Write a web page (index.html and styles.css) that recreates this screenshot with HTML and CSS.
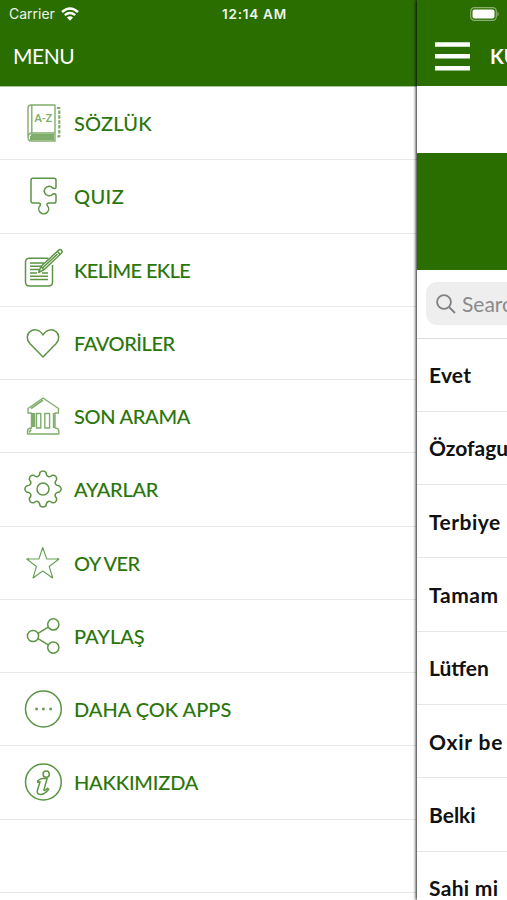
FILE: index.html
```html
<!DOCTYPE html>
<html lang="tr">
<head>
<meta charset="utf-8">
<meta name="viewport" content="width=device-width">
<title>Menu</title>
<link rel="stylesheet" href="styles.css">
</head>
<body>
<div class="phone">
  <aside class="drawer">
    <header class="drawer-head"><h1 class="title">MENU</h1></header>
    <nav class="menu">
      <a class="item"><svg class="icon faint" viewBox="0 0 40 40"><path d="M8 2H32V38H8Q5 38 5 34V5Q5 2 8 2ZM8.8 2V30M32 30H8Q5 31 5 34"/><path d="M33.8 5h2.5v28.5h-3" stroke-dasharray="3.5 1.4" stroke-width="2.2"/><path d="M8 32H31M7 34H31M7 36H31" stroke-width="2"/><text x="11.5" y="19.3">A-Z</text></svg><span class="label w1">SÖZLÜK</span></a>
      <a class="item"><svg class="icon" viewBox="0 0 40 40"><path d="M10 2.2H31Q33 2.2 33 4V11.2Q33 12.6 31.4 12.4L29.6 12Q28.5 10.2 26 10.2A4.8 4.8 0 1 0 29.6 18.3L31.5 17.8Q33 17.8 33 19.2V25.2Q33 27 31 27H25.8Q23 27.4 24.2 29.5A4.9 4.9 0 1 1 17.2 29.5Q18.4 27.4 15.6 27H10Q8 27 8 25V4Q8 2.2 10 2.2Z"/></svg><span class="label w2">QUIZ</span></a>
      <a class="item"><svg class="icon" viewBox="0 0 40 40"><path d="M25.5 8.3H6.5Q2.5 8.3 2.5 12.3V32Q2.5 36 6.5 36H25.5Q29.5 36 29.5 32V15"/><path d="M7 13H21M7 16.3H18M7 19.6H16M7 22.9H14M19 22.9H25M7 26.2H25M7 29.5H25" stroke-width="1.5"/><path d="M15.5 22.5L18 16.5L35 .7Q37.4-1.2 38.6 .2Q40 1.8 37.8 3.8L21 19.7ZM18 16.5L21 19.7M34.5 1.5L37 4.2M19.5 18L34.5 4"/></svg><span class="label w3">KELİME EKLE</span></a>
      <a class="item"><svg class="icon" viewBox="0 0 40 40"><path d="M20 34L6.8 20.5C3.4 17 3.4 11.5 7 8.7C11.2 5.1 17.3 7 20 12C22.7 7 28.8 5.1 33 8.7C36.6 11.5 36.6 17 33.2 20.5Z"/></svg><span class="label w4">FAVORİLER</span></a>
      <a class="item"><svg class="icon faint" viewBox="0 0 40 40"><path d="M20 2L35.5 12.5V17H32V32Q35.8 32 35.8 35V38H4.5V35Q4.5 32 8.5 32V17H5V12.5ZM13.5 17.5h4.3v14.5H13.5ZM21.8 17.5h4.8v14.5h-4.8ZM30.5 17v15"/><path d="M8 12.5L20 4M9.8 17V31M11.4 17V31M6 36.5L8 33.5" stroke-width="1.7"/></svg><span class="label w5">SON ARAMA</span></a>
      <a class="item"><svg class="icon" viewBox="0 0 40 40"><circle cx="20" cy="20" r="6"/><path d="M17 3.4Q20 .5 23 3.4C23.4 8 26.5 8.8 29.2 6.3Q33.5 5.7 33.7 10.4C30.8 13.8 32 16.5 36.5 17Q39.8 20 36.5 23C32 23.5 30.8 26.2 33.7 29.6Q33.5 34.3 29.2 33.7C26.5 31.2 23.4 32 23 36.6Q20 39.5 17 36.6C16.6 32 13.5 31.2 10.8 33.7Q6.5 34.3 6.3 29.6C9.2 26.2 8 23.5 3.5 23Q.2 20 3.5 17C8 16.5 9.2 13.8 6.3 10.4Q6.5 5.7 10.8 6.3C13.5 8.8 16.6 8 17 3.4Z"/></svg><span class="label w6">AYARLAR</span></a>
      <a class="item"><svg class="icon thin" viewBox="0 0 40 40"><path d="M19.7 4.5L23.7 16H36L26.2 23.5L29.7 35L19.7 28L10 35L13.4 23.5L3.7 16H15.9Z"/><path d="M19.2 6.2h1M4.7 16h1M34.2 16h1M10.7 34l.7-.6M28.9 34l-.7-.6" stroke-width="2.4"/></svg><span class="label w7">OY VER</span></a>
      <a class="item"><svg class="icon" viewBox="0 0 40 40"><circle cx="10" cy="20" r="5.6"/><circle cx="30.3" cy="8.4" r="5.6"/><circle cx="30.3" cy="31.6" r="5.6"/><path d="M15 17.3L25.3 11.2M15 22.7L25.3 28.8"/></svg><span class="label w8">PAYLAŞ</span></a>
      <a class="item"><svg class="icon" viewBox="0 0 40 40"><circle cx="20.4" cy="20" r="17.9"/><path d="M12.4 20h2.4M19.2 20h2.4M26.4 20h2.4" stroke-width="2.4"/></svg><span class="label w9">DAHA ÇOK APPS</span></a>
      <a class="item"><svg class="icon" viewBox="0 0 40 40"><circle cx="20.4" cy="20" r="17.9"/><circle cx="23.2" cy="12.2" r="3.1"/><path d="M14.6 19Q17 16.4 20 16.4H24.2L21 27.5Q20.7 29.3 22.5 28L24.5 26.2L25.7 27.3Q21.5 32.7 17.5 32.5Q13.3 32.3 14.5 28L17 19.8L14.8 20.4Z"/></svg><span class="label w10">HAKKIMIZDA</span></a>
      <div class="item"></div>
    </nav>
  </aside>
  <main class="page">
    <header class="page-head">
      <svg class="burger" viewBox="0 0 35 29"><path d="M0 2.5H35M0 14.3H35M0 26.2H35"/></svg>
      <h2 class="page-title">KU</h2>
    </header>
    <div class="space"></div>
    <div class="banner"></div>
    <div class="search-bar">
      <div class="search"><svg class="lens" viewBox="0 0 20 20"><circle cx="8" cy="8" r="6.9"/><path d="M13 13L19 19"/></svg><span>Search</span></div>
    </div>
    <ul class="words">
      <li class="x1">Evet</li><li class="x2">Özofagus</li><li class="x3">Terbiye</li><li class="x4">Tamam</li><li class="x5">Lütfen</li><li class="x6">Oxir be</li><li class="x7">Belki</li><li class="x8">Sahi mi</li>
    </ul>
  </main>
  <div class="status">
    <div class="carrier"><span>Carrier</span><svg class="wifi" viewBox="0 0 18 14"><path d="M1 5Q9-2 17 5M3.8 8.1Q9 3.8 14.2 8.1"/><path class="dot" d="M6 10.5Q9 8 12 10.5L9 13.8Z"/></svg></div>
    <span class="time">12:14 AM</span>
    <svg class="battery" viewBox="0 0 30 14"><rect class="shell" x=".7" y=".7" width="25.6" height="12.6" rx="3.6"/><rect class="charge" x="2.5" y="2.5" width="22" height="9" rx="2"/><path class="cap" d="M27.5 4.5Q30 7 27.5 9.5Z"/></svg>
  </div>
</div>
</body>
</html>
```

FILE: styles.css
```css
* { box-sizing: border-box; }
body { margin: 0; background: #fff; }
.phone {
  position: relative;
  display: flex;
  width: 507px;
  height: 900px;
  overflow: hidden;
  font-family: Lato, "Liberation Sans", sans-serif;
}
.drawer { flex: none; width: 417px; height: 900px; overflow: hidden; }
.drawer-head, .page-head {
  height: 86px;
  padding-top: 26px;
  display: flex;
  align-items: center;
  background: #2b6e00;
  color: #fff;
}
.drawer-head { padding-left: 13px; }
.title { margin: 0; font-size: 21px; font-weight: 400; line-height: 28px; letter-spacing: -.5px; }
.menu { border-top: 1px solid #a9c699; }
.item {
  display: flex;
  align-items: center;
  height: 73.25px;
  padding-left: 23px;
  border-bottom: 1px solid #e9e9e9;
  color: #2b760b;
}
.icon {
  flex: none;
  width: 40px;
  height: 40px;
  margin-right: 11px;
  overflow: visible;
  fill: none;
  stroke: #5c9444;
  stroke-width: 1.5;
  stroke-linejoin: round;
}
.faint { stroke: #80ad6c; stroke-width: 1.4; }
.thin { stroke: #6ba057; stroke-width: 1.1; }
.icon text { font-size: 10.5px; font-weight: 700; fill: #80ad6c; stroke: none; }
.label { font-size: 20px; font-weight: 500; line-height: 28px; white-space: nowrap; }
.w1 { letter-spacing: .2px; }
.w2 { letter-spacing: .4px; }
.w3 { letter-spacing: -.6px; }
.w4 { letter-spacing: -.45px; }
.w5 { letter-spacing: -.3px; }
.w6 { letter-spacing: -.3px; }
.w7 { letter-spacing: -.6px; }
.w10 { letter-spacing: -.2px; }
.page {
  flex: none;
  width: 90px;
  position: relative;
  background: #fff;
  box-shadow: -1px 0 3px 0 rgba(0, 0, 0, .9);
}
.page-head { padding-left: 18px; overflow: hidden; }
.burger { flex: none; width: 35px; height: 29px; stroke: #fff; stroke-width: 4.5; }
.page-title { margin: 0 0 0 20px; font-size: 20px; font-weight: 700; line-height: 28px; }
.space { height: 67px; }
.banner { height: 117px; background: #2b6e00; }
.search-bar { height: 68.5px; padding: 12px 0 12px 9px; border-bottom: 1px solid #dedede; overflow: hidden; }
.search {
  display: flex;
  align-items: center;
  gap: 6px;
  width: 320px;
  height: 43px;
  padding-left: 10px;
  border-radius: 11px;
  background: #eee;
  color: #8a8a8d;
  font-size: 21px;
}
.lens { width: 20px; height: 20px; fill: none; stroke: #808083; stroke-width: 1.8; }
.words { margin: 0; padding: 0; list-style: none; overflow: hidden; height: 561.5px; }
.words li {
  display: flex;
  align-items: center;
  height: 73.3px;
  padding-left: 12px;
  border-bottom: 1px solid #e6e6e6;
  font-size: 21px;
  font-weight: 700;
  white-space: nowrap;
  color: #111;
}
.words .x1 { letter-spacing: .2px; }
.words .x3 { letter-spacing: .5px; }
.words .x4 { letter-spacing: .6px; }
.words .x6 { letter-spacing: .8px; }
.words .x8 { letter-spacing: .3px; }
.status {
  position: absolute;
  inset: 0 0 auto;
  display: grid;
  grid-template-columns: 1fr auto 1fr;
  align-items: center;
  height: 27px;
  padding: 0 7px 0 9px;
  color: #eef5ea;
  font: 500 13px/18px Inter, sans-serif;
}
.carrier { display: flex; align-items: center; gap: 6px; font-weight: 400; font-size: 14px; }
.wifi { width: 18px; height: 14px; fill: none; stroke: #fff; stroke-width: 2.4; }
.dot { fill: #fff; stroke: none; }
.time { font-weight: 600; font-size: 13.5px; letter-spacing: .75px; }
.battery { width: 30px; height: 14px; justify-self: end; }
.shell { fill: none; stroke: #8bb073; stroke-width: 1.2; }
.charge { fill: #fff; }
.cap { fill: #8bb073; }
```
